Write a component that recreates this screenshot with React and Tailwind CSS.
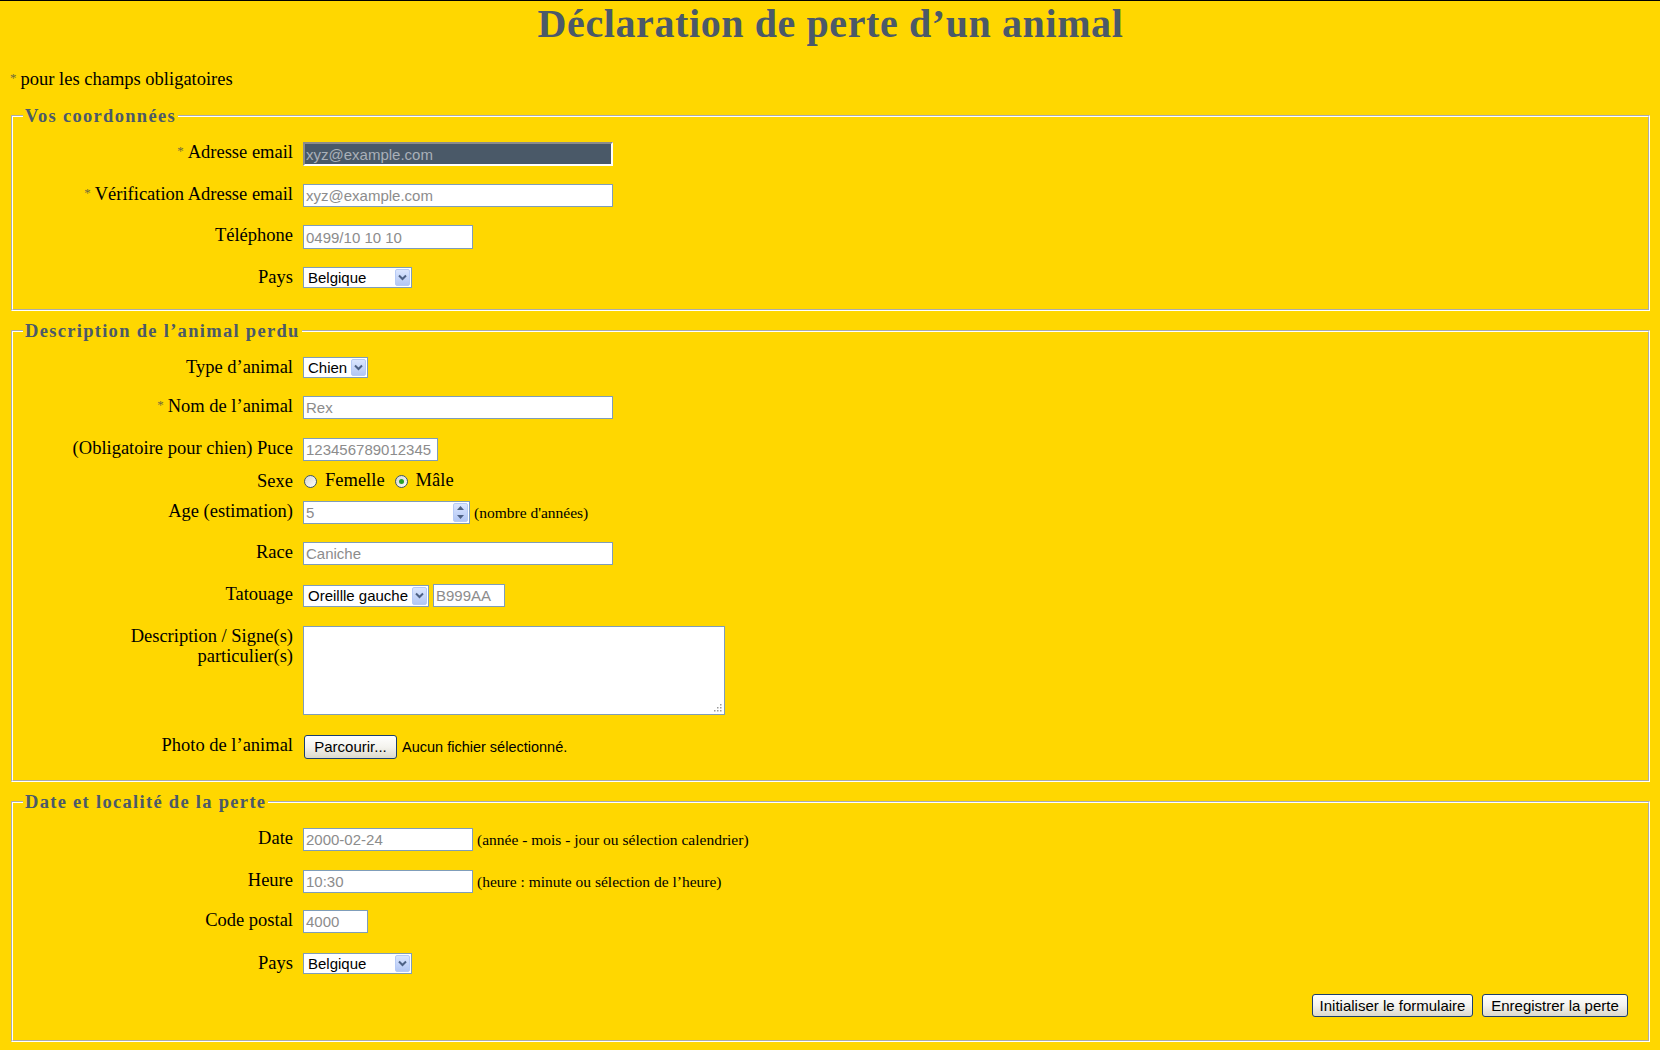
import clsx from 'clsx'

const sans = "font-['Liberation_Sans',Arial,sans-serif]"

function Req() {
  return (
    <span className="relative -top-[3px] mr-[4px] text-[13px] text-[#6f6a3e]">*</span>
  )
}

function Fieldset({ legend, className, children }) {
  return (
    <fieldset className={clsx('border-2 border-white [border-style:groove]', className)}>
      <legend className="ml-[10px] px-[2px] text-[18.5px] font-bold leading-[22px] tracking-[1.3px] text-[#4b5969]">
        {legend}
      </legend>
      {children}
    </fieldset>
  )
}

function Row({ label, req, className, children }) {
  return (
    <div className={clsx('flex items-start', className)}>
      <div className="w-[290px] shrink-0 pr-[10px] text-right text-[18.5px] leading-[20px]">
        {req ? <Req /> : null}
        {label}
      </div>
      <div className="flex items-center">{children}</div>
    </div>
  )
}

function TextInput({ value, className }) {
  return (
    <input
      readOnly
      placeholder={value}
      className={clsx(
        sans,
        'h-[23px] border border-[#7f9db9] bg-white px-[2px] text-[15px] outline-none placeholder:text-[#8c8c8c]',
        className,
      )}
    />
  )
}

function Chevron() {
  return (
    <svg width="9" height="7" viewBox="0 0 9 7">
      <path d="M1 1.5 L4.5 5 L8 1.5" stroke="#4d6185" strokeWidth="2" fill="none" />
    </svg>
  )
}

function Select({ value, className }) {
  return (
    <div className={clsx('flex h-[21px] border border-[#7f9db9] bg-white', className)}>
      <span className={clsx(sans, 'flex-1 pl-[4px] text-[15px] leading-[19px] text-black')}>
        {value}
      </span>
      <span className="m-[1px] flex w-[15px] items-center justify-center rounded-[2px] border border-[#b7cbf6] bg-gradient-to-b from-[#dbe6fe] to-[#b3c7f4]">
        <Chevron />
      </span>
    </div>
  )
}

function Radio({ checked }) {
  return (
    <span className="flex h-[13px] w-[13px] items-center justify-center rounded-full border border-[#3b5570] bg-gradient-to-br from-[#d7d7d0] to-white">
      {checked ? <span className="h-[5px] w-[5px] rounded-full bg-[#2aa12a]" /> : null}
    </span>
  )
}

function XpButton({ className, children }) {
  return (
    <button
      type="button"
      className={clsx(
        sans,
        'h-[23px] rounded-[3px] border border-[#1c3f6e] bg-gradient-to-b from-white via-[#f4f3ee] to-[#dcd9cc] text-[15px] text-black',
        className,
      )}
    >
      {children}
    </button>
  )
}

function Hint({ children }) {
  return <span className="ml-[4px] text-[15.5px] leading-[16px]">{children}</span>
}

export default function App() {
  return (
    <div className="min-h-[1050px] border-t border-black bg-[#ffd700] pb-[9px] pl-[11px] pr-[10px] font-['Liberation_Serif',serif] text-black">
      <h1 className="text-center text-[40px] font-bold leading-[46px] tracking-[0.6px] text-[#4b5969]">
        Déclaration de perte d’un animal
      </h1>
      <p className="-ml-[1px] mt-[22px] text-[18.5px] leading-[20px]">
        <Req />
        pour les champs obligatoires
      </p>

      <Fieldset legend="Vos coordonnées" className="mt-[14px] pb-[21px] pt-[15px]">
        <Row label="Adresse email" req>
          <input
            readOnly
            placeholder="xyz@example.com"
            className={clsx(
              sans,
              'h-[24px] w-[310px] border-2 border-b-white border-l-[#8c8c8c] border-r-white border-t-[#8c8c8c] bg-[#4a5968] px-[1px] text-[15px] outline-none placeholder:text-[#a9b0b8]',
            )}
          />
        </Row>
        <Row label="Vérification Adresse email" req className="mt-[18px]">
          <TextInput value="xyz@example.com" className="w-[310px]" />
        </Row>
        <Row label="Téléphone" className="mt-[18px]">
          <TextInput value="0499/10 10 10" className="h-[24px] w-[170px]" />
        </Row>
        <Row label="Pays" className="mt-[18px]">
          <Select value="Belgique" className="w-[109px]" />
        </Row>
      </Fieldset>

      <Fieldset legend="Description de l’animal perdu" className="mt-[9px] pb-[21px] pt-[15px]">
        <Row label="Type d’animal">
          <Select value="Chien" className="w-[65px]" />
        </Row>
        <Row label="Nom de l’animal" req className="mt-[18px]">
          <TextInput value="Rex" className="w-[310px]" />
        </Row>
        <Row label="(Obligatoire pour chien) Puce" className="mt-[19px]">
          <TextInput value="123456789012345" className="w-[135px]" />
        </Row>
        <Row label="Sexe" className="mt-[10px]">
          <div className="flex h-[20px] items-center text-[18.5px]">
            <span className="ml-[1px]">
              <Radio />
            </span>
            <span className="ml-[8px]">Femelle</span>
            <span className="ml-[10px]">
              <Radio checked />
            </span>
            <span className="ml-[8px]">Mâle</span>
          </div>
        </Row>
        <Row label="Age (estimation)" className="mt-[10px]">
          <div className="flex h-[23px] w-[167px] border border-[#7f9db9] bg-white">
            <span className={clsx(sans, 'flex-1 pl-[2px] text-[15px] leading-[21px] text-[#8c8c8c]')}>5</span>
            <span className="m-[1px] flex w-[15px] flex-col overflow-hidden rounded-[2px] border border-[#b7cbf6] bg-gradient-to-b from-[#dbe6fe] to-[#b3c7f4]">
              <span className="flex flex-1 items-center justify-center">
                <svg width="7" height="4" viewBox="0 0 7 4">
                  <path d="M0 4 L3.5 0 L7 4 Z" fill="#4d6185" />
                </svg>
              </span>
              <span className="flex flex-1 items-center justify-center">
                <svg width="7" height="4" viewBox="0 0 7 4">
                  <path d="M0 0 L3.5 4 L7 0 Z" fill="#4d6185" />
                </svg>
              </span>
            </span>
          </div>
          <Hint>(nombre d'années)</Hint>
        </Row>
        <Row label="Race" className="mt-[18px]">
          <TextInput value="Caniche" className="w-[310px]" />
        </Row>
        <Row label="Tatouage" className="mt-[19px]">
          <Select value="Oreillle gauche" className="h-[22px] w-[126px]" />
          <TextInput value="B999AA" className="ml-[4px] w-[72px]" />
        </Row>
        <Row label={<>Description / Signe(s)<br />particulier(s)</>} className="mt-[19px]">
          <div className="relative h-[89px] w-[422px] border border-[#7f9db9] bg-white">
            <svg className="absolute bottom-[2px] right-[2px]" width="9" height="9" viewBox="0 0 9 9">
              <g fill="#9a9a9a">
                <rect x="7" y="1" width="1.5" height="1.5" />
                <rect x="4" y="4" width="1.5" height="1.5" />
                <rect x="7" y="4" width="1.5" height="1.5" />
                <rect x="1" y="7" width="1.5" height="1.5" />
                <rect x="4" y="7" width="1.5" height="1.5" />
                <rect x="7" y="7" width="1.5" height="1.5" />
              </g>
            </svg>
          </div>
        </Row>
        <Row label="Photo de l’animal" className="mt-[20px]">
          <XpButton className="ml-[1px] h-[24px] w-[93px]">Parcourir...</XpButton>
          <span className={clsx(sans, 'ml-[5px] mt-[2px] text-[14.5px]')}>Aucun fichier sélectionné.</span>
        </Row>
      </Fieldset>

      <Fieldset legend="Date et localité de la perte" className="mt-[9px] pb-[23px] pt-[15px]">
        <Row label="Date">
          <TextInput value="2000-02-24" className="w-[170px]" />
          <Hint>(année - mois - jour ou sélection calendrier)</Hint>
        </Row>
        <Row label="Heure" className="mt-[19px]">
          <TextInput value="10:30" className="w-[170px]" />
          <Hint>(heure : minute ou sélection de l’heure)</Hint>
        </Row>
        <Row label="Code postal" className="mt-[17px]">
          <TextInput value="4000" className="w-[65px]" />
        </Row>
        <Row label="Pays" className="mt-[20px]">
          <Select value="Belgique" className="w-[109px]" />
        </Row>
        <div className="mt-[20px] flex justify-end gap-[9px] pr-[20px]">
          <XpButton className="w-[161px]">Initialiser le formulaire</XpButton>
          <XpButton className="w-[146px]">Enregistrer la perte</XpButton>
        </div>
      </Fieldset>
    </div>
  )
}
